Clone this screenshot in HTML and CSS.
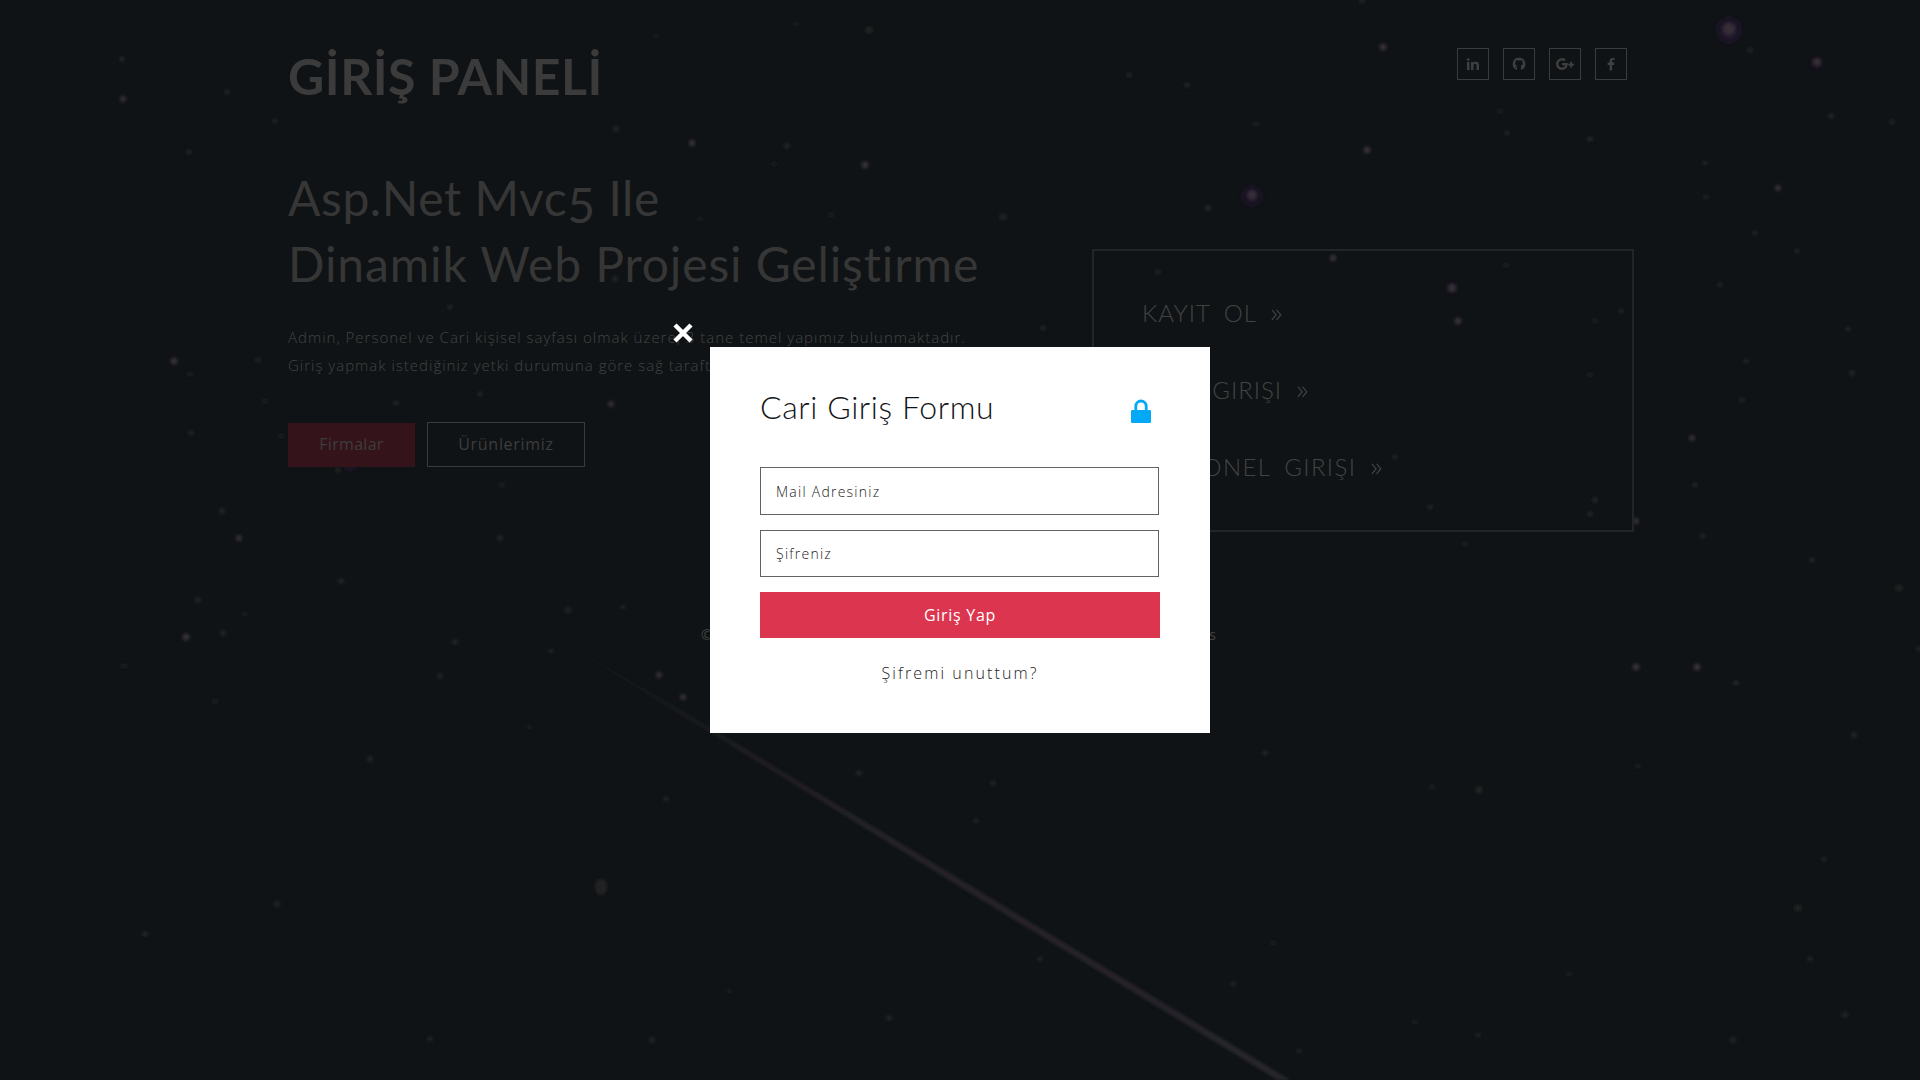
FILE: index.html
```html
<!DOCTYPE html>
<html lang="tr">
<head>
<meta charset="utf-8">
<title>Giriş Paneli</title>
<link rel="stylesheet" href="styles.css">
</head>
<body>
<svg class="sky" viewBox="0 0 1920 1080" aria-hidden="true">
  <defs>
    <linearGradient id="trail" gradientUnits="userSpaceOnUse" x1="540" y1="628" x2="1284" y2="1080">
      <stop offset="0" stop-color="#29232a" stop-opacity="0.1"/>
      <stop offset=".35" stop-color="#29232a" stop-opacity=".8"/>
      <stop offset="1" stop-color="#28252a"/>
    </linearGradient>
    <filter id="soft" x="-5%" y="-5%" width="110%" height="110%"><feGaussianBlur stdDeviation="1.6"/></filter>
    <filter id="glow" x="-100%" y="-100%" width="300%" height="300%"><feGaussianBlur stdDeviation="3"/></filter>
  </defs>
  <path filter="url(#soft)" fill="url(#trail)" d="M540 628L712 729L961 880L1290 1080H1278L959 886L710 732Z"/>
  <g filter="url(#glow)" fill="#24132f">
    <ellipse cx="1729" cy="30" rx="11" ry="12"/><circle cx="1252" cy="196" r="9"/><circle cx="350" cy="466" r="5"/><circle cx="1452" cy="288" r="5"/><circle cx="1817" cy="63" r="5"/>
  </g>
  <g filter="url(#soft)" fill="#342e34">
    <circle cx="1729" cy="29" r="6"/><circle cx="1252" cy="195" r="4.5"/><circle cx="1452" cy="288" r="4"/><circle cx="1817" cy="62" r="4"/>
    <circle cx="1636" cy="667" r="3.5"/><circle cx="1697" cy="667" r="3.5"/><circle cx="174" cy="361" r="3.5"/><circle cx="186" cy="637" r="3.5"/>
    <circle cx="122" cy="59" r="2"/><circle cx="123" cy="99" r="3"/><circle cx="239" cy="538" r="3"/><circle cx="692" cy="143" r="3.2"/>
    <circle cx="865" cy="165" r="3.6"/><circle cx="1383" cy="47" r="3.5"/><circle cx="1367" cy="150" r="3.5"/><circle cx="1458" cy="321" r="3.5"/>
    <circle cx="1333" cy="258" r="3.2"/><circle cx="659" cy="675" r="3"/><circle cx="683" cy="697" r="3"/><circle cx="611" cy="404" r="3"/>
    <circle cx="1692" cy="438" r="3"/><circle cx="1636" cy="521" r="3"/><circle cx="1778" cy="188" r="3"/>
  </g>
  <g filter="url(#soft)" fill="#232223">
    <ellipse cx="601" cy="887" rx="6" ry="8"/><circle cx="869" cy="30" r="3.2"/><circle cx="796" cy="24" r="2"/><circle cx="787" cy="146" r="3"/>
    <circle cx="616" cy="129" r="3"/><circle cx="227" cy="92" r="2.5"/><circle cx="275" cy="121" r="2.5"/><circle cx="189" cy="152" r="2.5"/>
    <circle cx="656" cy="36" r="2"/><circle cx="774" cy="164" r="2"/><circle cx="615" cy="279" r="3"/><circle cx="450" cy="307" r="2.5"/>
    <circle cx="258" cy="360" r="2.5"/><circle cx="190" cy="374" r="2.3"/><circle cx="265" cy="401" r="2.3"/><circle cx="396" cy="403" r="2.5"/>
    <circle cx="480" cy="394" r="2.5"/><circle cx="191" cy="433" r="2.5"/><circle cx="222" cy="511" r="3"/><circle cx="281" cy="436" r="2.3"/>
    <circle cx="502" cy="485" r="2.3"/><circle cx="500" cy="538" r="3"/><circle cx="338" cy="470" r="2.6"/><circle cx="700" cy="219" r="2"/>
    <circle cx="831" cy="215" r="2.3"/><circle cx="1003" cy="217" r="3.2"/><circle cx="1129" cy="75" r="2.6"/><circle cx="1187" cy="85" r="2.8"/>
    <circle cx="1208" cy="208" r="3"/><circle cx="1256" cy="124" r="2.3"/><circle cx="1362" cy="1" r="2.6"/><circle cx="1500" cy="111" r="2.3"/>
    <circle cx="1507" cy="133" r="2.5"/><circle cx="1590" cy="139" r="2.8"/><circle cx="1750" cy="50" r="2.6"/><circle cx="1831" cy="116" r="2.8"/>
    <circle cx="1892" cy="122" r="2.6"/><circle cx="1705" cy="163" r="2.4"/><circle cx="1706" cy="197" r="2.4"/><circle cx="1755" cy="233" r="2.5"/>
    <circle cx="1797" cy="251" r="2.5"/><circle cx="1506" cy="265" r="2.3"/><circle cx="1621" cy="311" r="2.5"/><circle cx="1595" cy="321" r="2.3"/>
    <circle cx="1720" cy="285" r="2.5"/><circle cx="1848" cy="329" r="2.5"/><circle cx="1746" cy="361" r="2.5"/><circle cx="1852" cy="373" r="3"/>
    <circle cx="1742" cy="400" r="2.5"/><circle cx="1590" cy="375" r="2.3"/><circle cx="1395" cy="457" r="2.5"/><circle cx="1430" cy="507" r="2.5"/>
    <circle cx="1595" cy="500" r="2.8"/><circle cx="1590" cy="514" r="2.8"/><circle cx="1695" cy="485" r="2.5"/><circle cx="1703" cy="536" r="2.5"/>
    <circle cx="1158" cy="272" r="2.5"/><circle cx="1043" cy="328" r="2.5"/><circle cx="341" cy="581" r="3"/><circle cx="198" cy="600" r="3"/>
    <circle cx="223" cy="633" r="3"/><circle cx="245" cy="614" r="2"/><circle cx="124" cy="666" r="2.3"/><circle cx="455" cy="642" r="3"/>
    <circle cx="568" cy="610" r="3"/><circle cx="623" cy="607" r="2.4"/><circle cx="551" cy="651" r="2.4"/><circle cx="440" cy="676" r="2.6"/>
    <circle cx="215" cy="701" r="2.3"/><circle cx="370" cy="759" r="3"/><circle cx="529" cy="727" r="2"/><circle cx="666" cy="799" r="2.6"/>
    <circle cx="859" cy="773" r="3"/><circle cx="277" cy="904" r="3"/><circle cx="145" cy="934" r="2.8"/><circle cx="430" cy="1039" r="2.6"/>
    <circle cx="652" cy="1040" r="3"/><circle cx="889" cy="1018" r="3"/><circle cx="729" cy="991" r="2"/><circle cx="1265" cy="753" r="2.8"/>
    <circle cx="1479" cy="790" r="3.6"/><circle cx="1432" cy="787" r="2.2"/><circle cx="1638" cy="766" r="2.2"/><circle cx="1736" cy="683" r="2.8"/>
    <circle cx="1854" cy="735" r="3"/><circle cx="1812" cy="560" r="2.8"/><circle cx="1899" cy="588" r="3.2"/><circle cx="1465" cy="544" r="2.4"/>
    <circle cx="1824" cy="859" r="2.5"/><circle cx="1798" cy="908" r="3.2"/><circle cx="1810" cy="959" r="2.6"/><circle cx="1845" cy="1015" r="3"/>
    <circle cx="1733" cy="1040" r="3"/><circle cx="1569" cy="974" r="2.3"/><circle cx="1478" cy="1035" r="2.4"/><circle cx="1233" cy="984" r="2.5"/>
    <circle cx="1040" cy="959" r="2.5"/><circle cx="993" cy="783" r="2.6"/><circle cx="976" cy="821" r="2.6"/><circle cx="1415" cy="1022" r="2.2"/>
    <circle cx="1299" cy="1051" r="2.4"/><circle cx="1273" cy="943" r="2.2"/><circle cx="1919" cy="649" r="2.5"/>
  </g>
</svg>

<div class="page">
  <header class="header">
    <h1 class="brand">GİRİŞ PANELİ</h1>
    <nav class="social">
      <a class="social-link"><svg viewBox="0 0 14 14"><path d="M1 5h2.500v8H1zM2.200 1.200a1.350 1.350 0 1 1 0 2.700 1.350 1.350 0 0 1 0-2.700zM5 5h2.400v1.100C7.900 5.300 8.700 4.800 9.900 4.800c2.300 0 3.100 1.500 3.100 3.700V13h-2.500V8.900c0-1.300-.3-2.100-1.400-2.100S7.500 7.700 7.500 8.900V13H5z"/></svg></a>
      <a class="social-link"><svg viewBox="0 0 14 14"><path d="M7 .8a6.200 6.200 0 0 0-2 12.100V10.400c-1.200.2-1.700-.4-2.100-1.200.8.100 1.100.8 2.200.6.100-.5.300-.8.500-1C4.200 8.600 3.200 8 3.200 6.100c0-.6.2-1.200.6-1.600-.1-.5-.1-1.100.1-1.600.6 0 1.200.3 1.700.7a6 6 0 0 1 2.800 0c.5-.4 1.100-.7 1.700-.7.2.5.2 1.100.1 1.600.4.4.6 1 .6 1.600 0 1.900-1 2.500-2.400 2.700.4.3.6.800.6 1.500v2.600A6.200 6.200 0 0 0 7 .8z"/></svg></a>
      <a class="social-link"><svg class="wide" viewBox="0 0 20 14"><path d="M7 6h5.700c.4 3.900-1.900 7-5.700 7A6 6 0 1 1 11 2.500L9.300 4.200A3.600 3.600 0 1 0 7 10.600c1.700 0 2.800-.9 3.200-2.400H7zM15.200 4.800h1.900v1.900H19v1.800h-1.900v1.900h-1.900V8.500h-1.900V6.700h1.900z"/></svg></a>
      <a class="social-link"><svg viewBox="0 0 14 14"><path d="M10.500 1v2.100H9.200c-.9 0-1.100.4-1.100 1.100v1.400h2.300L10.100 8H8.100v5.500H5.600V8h-2V5.600h2V3.800C5.600 1.900 6.800.9 8.600.9c.9 0 1.600 0 1.900.1z"/></svg></a>
    </nav>
  </header>

  <main class="main">
    <section class="intro">
      <h2 class="headline"><span class="line-a">Asp.Net Mvc<span class="old-five">5</span> Ile</span><br><span class="line-b">Dinamik Web Projesi Geliştirme</span></h2>
      <p class="lead">Admin, Personel ve Cari kişisel sayfası olmak üzere, 3 tane temel yapımız bulunmaktadır.<br>Giriş yapmak istediğiniz yetki durumuna göre sağ taraftan seçiniz.</p>
      <div class="actions">
        <a class="btn btn-fill">Firmalar</a>
        <a class="btn btn-line">Ürünlerimiz</a>
      </div>
    </section>
    <aside class="panel">
      <a class="panel-link">KAYIT OL <span class="raquo">»</span></a>
      <a class="panel-link">CARI GIRIŞI <span class="raquo">»</span></a>
      <a class="panel-link panel-link-long">PERSONEL GIRIŞI <span class="raquo">»</span></a>
    </aside>
  </main>

  <footer class="footer"><span>© 2020 Giriş Paneli</span><span>Design by W3layouts</span></footer>
</div>

<div class="overlay">
  <div class="modal">
    <svg class="close" viewBox="0 0 20 20"><path d="M2 2L18 18M18 2L2 18"/></svg>
    <div class="modal-head">
      <h3 class="modal-title">Cari Giriş Formu</h3>
      <svg class="lock" viewBox="0 0 20 24"><path d="M4.800 12V7.200a5.200 5.200 0 0 1 10.400 0V12" fill="none" stroke="#03a9f7" stroke-width="2.800"/><rect y="11" width="20" height="13" rx="1.300" fill="#03a9f7"/></svg>
    </div>
    <form class="form">
      <input class="field" type="email" placeholder="Mail Adresiniz">
      <input class="field field-pass" type="password" placeholder="Şifreniz">
      <button class="submit" type="button">Giriş Yap</button>
    </form>
    <p class="forgot">Şifremi unuttum?</p>
  </div>
</div>
</body>
</html>
```
FILE: styles.css
```css
* { box-sizing: border-box; margin: 0; padding: 0; }
body {
  height: 1080px;
  overflow: hidden;
  background: #0f1315;
  color: #3d3d3d;
  font-family: "Open Sans", "Noto Sans", sans-serif;
}
.sky { position: absolute; inset: 0; width: 1920px; height: 1080px; }
.page { position: relative; width: 1346px; margin-left: 288px; padding-top: 46px; }

.header { display: flex; justify-content: space-between; height: 60px; }
.brand { font: 700 50px/60px Lato, sans-serif; letter-spacing: .5px; color: #3b3b3b; white-space: nowrap; }
.social { display: flex; gap: 14px; padding: 2px 7px 0 0; }
.social-link {
  display: flex; align-items: center; justify-content: center;
  width: 32px; height: 32px; border: 1px solid #3b3b3b;
}
.social-link svg { width: 14px; height: 14px; fill: #3f3f3f; }
.social-link .wide { width: 20px; }

.main { display: flex; justify-content: space-between; margin-top: 59px; }
.intro { width: 760px; }
.headline { font: 400 48px/66px Lato, sans-serif; color: #363636; white-space: nowrap; }
.line-a { letter-spacing: .55px; }
.line-b { letter-spacing: .87px; }
.old-five { position: relative; top: 7px; }
.lead { margin-top: 26px; font-weight: 300; font-size: 15px; line-height: 28px; letter-spacing: 1px; white-space: nowrap; color: #444; }
.actions { display: flex; align-items: flex-end; gap: 12px; margin-top: 43px; }
.btn { text-align: center; font-size: 16px; }
.btn-fill { width: 127px; height: 44px; line-height: 43px; background: #34141a; letter-spacing: .3px; }
.btn-line { width: 158px; height: 45px; line-height: 42px; border: 1px solid #3b3b3b; letter-spacing: .7px; }

.panel {
  display: flex; flex-direction: column; gap: 47px;
  width: 542px; height: 283px; margin-top: 84px;
  padding: 47px 48px; border: 2px solid #222526;
}
.panel-link { height: 30px; font: 300 24px/30px Lato, sans-serif; letter-spacing: 1px; word-spacing: 6px; white-space: nowrap; color: #434343; }
.panel-link-long { letter-spacing: 1.35px; }
.raquo { display: inline-block; font-size: 27px; line-height: 24px; letter-spacing: 0; transform: scaleX(1.35); transform-origin: left; margin-left: -1px; }
.footer {
  display: flex; justify-content: space-between; width: 515px;
  margin: 92px 0 0 413px; font-size: 14px; line-height: 22px; white-space: nowrap; color: #444;
}

.overlay { position: absolute; inset: 0; display: flex; align-items: center; justify-content: center; }
.modal { position: relative; width: 500px; height: 386px; padding: 42px 50px 0; background: #fff; }
.close { position: absolute; left: -37px; top: -24px; width: 20px; height: 20px; stroke: #fff; stroke-width: 4.500; }
.modal-head { display: flex; justify-content: space-between; height: 78px; padding-right: 9px; }
.modal-title { font: 300 32px/36px Lato, sans-serif; letter-spacing: .6px; color: #111417; white-space: nowrap; }
.lock { width: 20px; height: 24px; margin-top: 10px; }
.form { display: flex; flex-direction: column; }
.field {
  width: 399px; height: 48px; padding: 0 15px; border: 1px solid #616264;
  font: 300 14px "Open Sans", sans-serif; letter-spacing: 1.25px; color: #222; outline: 0;
}
.field::placeholder { color: #222; opacity: 1; }
.field-pass { margin-top: 15px; height: 47px; }
.submit {
  width: 400px; height: 46px; margin-top: 15px; border: 0; background: #dc3550; color: #fff;
  font: 400 16px "Open Sans", sans-serif; letter-spacing: .7px;
}
.forgot { margin-top: 23px; text-align: center; font-weight: 300; font-size: 16px; line-height: 24px; letter-spacing: 2.100px; color: #222; }
```
